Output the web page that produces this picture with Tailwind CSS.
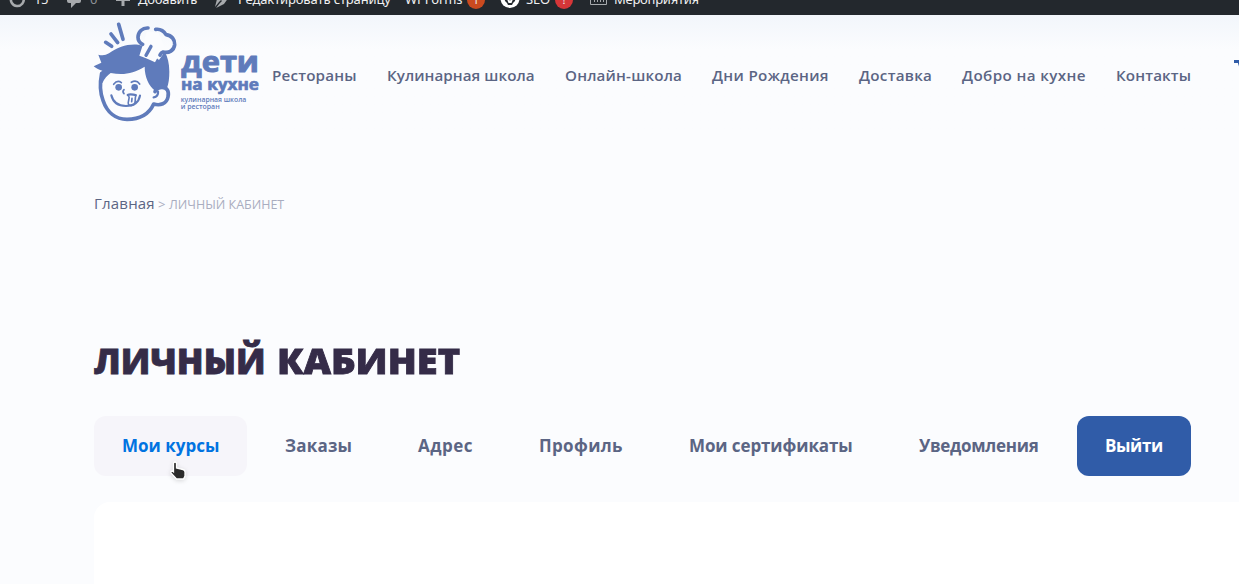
<!DOCTYPE html>
<html lang="ru">
<head>
<meta charset="utf-8">
<title>Личный кабинет</title>
<script src="https://cdn.jsdelivr.net/npm/@tailwindcss/browser@4"></script>
</head>
<body class="h-[584px] overflow-hidden bg-[#fbfcfe] font-['Open_Sans','Noto_Sans',sans-serif] text-[#5b6584]">
<div class="h-[15px] overflow-hidden bg-[#23282d] font-['Noto_Sans',sans-serif] text-[13px] text-[#f0f0f1]">
  <div class="-mt-4 flex h-8 items-center whitespace-nowrap">
    <svg class="ml-[9px] h-5 w-[17px] shrink-0" viewBox="0 0 17 20" fill="none" stroke="#a7aaad" stroke-width="2.6"><path d="M2.500 7a6.400 6.400 0 1 0 12 1"/><path d="M10 9l4-4 3 5z" fill="#a7aaad" stroke="none"/></svg>
    <span class="ml-2 w-8 tracking-[-0.5px]">15</span>
    <svg class="h-5 w-4 shrink-0" viewBox="0 0 16 20" fill="#a7aaad"><path d="M3 3h10q2 0 2 2v6q0 2-2 2h-3l-5 5v-5H3q-2 0-2-2V5q0-2 2-2z"/></svg>
    <span class="ml-2 w-[25px] text-[#8c9196]">0</span>
    <svg class="h-5 w-4 shrink-0" viewBox="0 0 16 20" fill="#a7aaad"><path d="M6.500 2h3v6H15v3H9.500v5h-3v-5H1V8h5.500z"/></svg>
    <span class="ml-[7px] w-[76px] tracking-[-0.2px]">Добавить</span>
    <svg class="h-5 w-4 shrink-0" viewBox="0 0 16 20" fill="#a7aaad"><path d="M1 17l2-8 7-6 5 4-5 7-8 4 4-5 2-2-1-1-2 2z"/></svg>
    <span class="ml-2 w-[167px] tracking-[-0.13px]">Редактировать страницу</span>
    <span class="w-[62px] tracking-[-0.15px]">WPForms</span>
    <span class="flex size-[18px] items-center justify-center rounded-full bg-[#ca4a1f] text-[11px]">1</span>
    <svg class="ml-[15px] h-5 w-5 shrink-0" viewBox="0 0 20 20"><circle cx="10" cy="8.500" r="9.500" fill="#fff"/><path d="M4 5l3 2 3 2 3-2 3-2-1 6-2 2-1 2H8l-1-2-2-2z" fill="#23282d"/><path d="M7 9l3 1.500L13 9l-1.500 4h-3z" fill="#fff"/></svg>
    <span class="ml-[6px] w-[29px] tracking-[-0.2px]">SEO</span>
    <span class="flex size-[18px] items-center justify-center rounded-full bg-[#d63638] text-[11px]">!</span>
    <svg class="ml-[17px] h-5 w-[17px] shrink-0" viewBox="0 0 17 20" fill="none" stroke="#a7aaad"><path d="M.5 1v13.500h16V1M4.500 6v6M7.500 6v6M10.500 6v6M13.500 6v6"/></svg>
    <span class="ml-[7px] tracking-[-0.25px]">Мероприятия</span>
  </div>
</div>

<header class="flex h-[115px] items-start overflow-hidden bg-linear-to-b from-[#f2f6fb] to-[#fbfcfe] to-30% pl-[85px]">
  <svg class="h-[115px] w-[187px] shrink-0" viewBox="0 0 561 345" fill="none" stroke="#5f7bbb" stroke-linecap="round" stroke-linejoin="round">
    <path d="M101 28l13 45M78 57l20 26M62 82l18 12" stroke-width="11"/>
    <path d="M50 175C44 205 46 235 54 256C66 292 92 313 126 313C162 313 192 298 206 267C226 273 245 266 249 246C253 228 246 217 231 217C221 217 214 222 210 230" stroke-width="11"/>
    <path d="M219 230c1 9-4 16-13 17" stroke-width="7"/>
    <path d="M26 154l23-11-9-24c12 3 22 2 32-4 28-19 54-29 88-26l12 3 50 43 17-25c9 15 14 35 14 60 0 19-2 36-7 49-14-4-28-2-36 8-18-14-31-40-31-72-35 22-64 25-102 19-10 7-19 17-25 31-5-9-7-19-5-30 1-4 3-6 5-8-9-2-18-6-26-13z" fill="#5f7bbb" stroke="none"/>
    <path d="M178 75l-15 47q20 6 47 20l17-31 12-12-18-45-35-5z" fill="#fbfcfe" stroke="none"/>
    <path d="M189 39c-17-1-30 12-30 28 0 10 5 17 14 21M212 43c15-2 25 6 31 16 17 2 27 15 26 30-2 17-17 27-35 22q-6 2-9 9" stroke-width="11"/>
    <path d="M198 94l-15 27" stroke-width="10"/>
    <circle cx="101" cy="217" r="10" fill="#5f7bbb" stroke="none"/><circle cx="149" cy="217" r="10" fill="#5f7bbb" stroke="none"/>
    <path d="M86 208q11-14 23-5M139 202q15-9 25 5M117 224q-6 6 0 12" stroke-width="5"/>
    <path d="M79 241c5 21 22 32 44 32 22 0 38-10 42-31M128 240c8-5 17 0 24 0" stroke-width="6.500"/>
    <path d="M131 243c6 6-6 20 0 26 8 6 17 1 19-7 2-7-1-14 3-21M141 250l-1 10" stroke-width="5"/>
    <g fill="#5f7bbb" font-family="Open Sans" font-weight="700">
      <text x="289" y="172" font-size="86" stroke-width="3" textLength="233" lengthAdjust="spacingAndGlyphs">дети</text>
      <text x="288" y="225" font-size="47" stroke-width="2" textLength="234" lengthAdjust="spacingAndGlyphs">на кухне</text>
      <text x="287" y="261" font-size="19" stroke="none" font-weight="600" textLength="197" lengthAdjust="spacingAndGlyphs">кулинарная школа</text>
      <text x="287" y="281" font-size="19" stroke="none" font-weight="600" textLength="117" lengthAdjust="spacingAndGlyphs">и ресторан</text>
    </g>
  </svg>
  <nav class="mt-[48px] flex gap-[30px] text-[15.200px] leading-6 font-semibold whitespace-nowrap">
    <a class="w-[85px] tracking-[0.18px]">Рестораны</a>
    <a class="w-[148px] tracking-[0.05px]">Кулинарная школа</a>
    <a class="w-[117px] tracking-[0.18px]">Онлайн-школа</a>
    <a class="w-[117px] tracking-[0.33px]">Дни Рождения</a>
    <a class="w-[73px] tracking-[0.28px]">Доставка</a>
    <a class="w-[124px] tracking-[0.38px]">Добро на кухне</a>
    <a class="w-[75px] tracking-[0.13px]">Контакты</a>
  </nav>
  <svg class="mt-[45px] ml-[43px] h-6 w-6 shrink-0" viewBox="0 0 24 24" fill="none" stroke="#305ca8" stroke-width="3"><path d="M0 1.500h5l4 13h12"/></svg>
</header>

<main class="pl-[94px]">
  <div class="mt-[61px] flex h-6 items-baseline whitespace-nowrap">
    <a class="w-[64px] text-[15px] leading-6 tracking-[0.2px]">Главная</a>
    <span class="w-[11px] text-[13px] text-[#a9adc0]">&gt;</span>
    <span class="text-[12.500px] text-[#a9adc0]">ЛИЧНЫЙ КАБИНЕТ</span>
  </div>
  <h1 class="mt-[121px] flex h-[50px] text-[35px] leading-[50px] font-extrabold whitespace-nowrap text-[#352c48] [-webkit-text-stroke:0.8px_#352c48]"><span class="w-[183px]">ЛИЧНЫЙ</span> <span class="origin-left scale-x-[1.085]">КАБИНЕТ</span></h1>
  <div class="mt-[30px] flex gap-[10px] text-[17px] leading-[59px] font-bold whitespace-nowrap">
    <a class="relative h-[60px] w-[153px] rounded-xl bg-[#f6f5fa] pl-7 text-[#0073e1]">Мои курсы
      <svg class="absolute top-[44px] left-[75px] h-[22px] w-[19px] drop-shadow-sm" viewBox="0 0 19 22"><path d="M4.500 3q1.500-2 3 0v5l6.500 1.500q2 .5 2 2.500v4l-1.500 3H7.500l-5.500-6q-.5-2 1.500-2l1 .8z" fill="#2b2b2b" stroke="#fff" stroke-width="1.300"/></svg></a>
    <a class="w-[123px] pl-7 tracking-[0.2px]">Заказы</a>
    <a class="w-[111px] pl-7 tracking-[0.5px]">Адрес</a>
    <a class="w-[140px] pl-7 tracking-[0.35px]">Профиль</a>
    <a class="w-[220px] pl-7 tracking-[-0.1px]">Мои сертификаты</a>
    <a class="w-[176px] pl-7 tracking-[-0.3px]">Уведомления</a>
    <a class="h-[60px] w-[114px] rounded-xl bg-[#305ca8] pl-7 tracking-[-0.4px] text-white">Выйти</a>
  </div>
  <section class="mt-[26px] h-[82px] rounded-tl-2xl bg-white"></section>
</main>
</body>
</html>
